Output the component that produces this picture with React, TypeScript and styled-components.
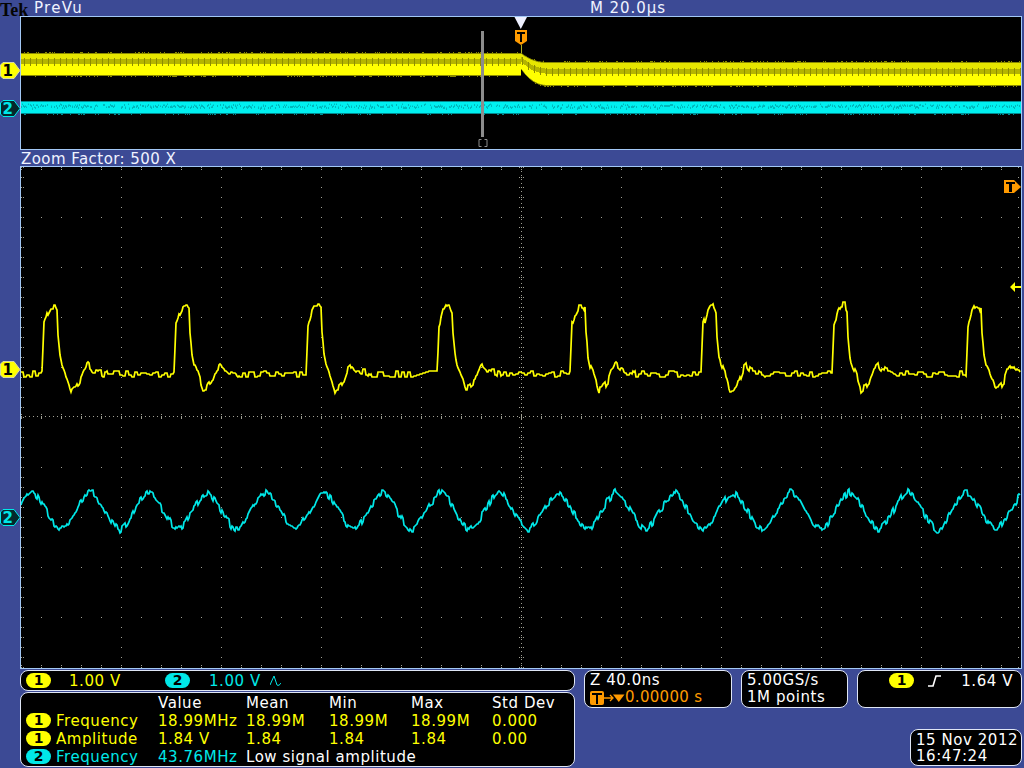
import React from "react";
import styled, { createGlobalStyle } from "styled-components";

const BG = "#3c4a95";
const EDGE = "#a3c8f5";
const PANEL_EDGE = "#dfe6f5";
const YELLOW = "#ffff00";
const CYAN = "#00e8e8";
const ORANGE = "#ff9a00";

const Global = createGlobalStyle`
  html, body { margin: 0; padding: 0; background: ${BG}; }
  #root { width: 1024px; height: 768px; overflow: hidden; }
`;

const Screen = styled.div`
  position: relative;
  width: 1024px;
  height: 768px;
  box-sizing: border-box;
  padding: 0 2px 0 20px;
  background: ${BG};
  overflow: hidden;
  font-family: "DejaVu Sans", sans-serif;
  font-size: 15px;
  letter-spacing: 0.55px;
  color: #fff;
  display: flex;
  flex-direction: column;
`;

const TopBar = styled.div`
  height: 16px;
  box-sizing: border-box;
  padding-top: 1px;
  line-height: 15px;
  display: grid;
  grid-template-columns: 1fr 1fr;
  color: #f0f3ff;
`;

const PreVu = styled.span`
  padding-left: 14px;
  letter-spacing: 1.3px;
`;

const Timebase = styled.span`
  padding-left: 69px;
  letter-spacing: 0.95px;
`;

const Logo = styled.span`
  position: absolute;
  left: 0;
  top: 0;
  font-family: "Liberation Serif", serif;
  font-weight: 700;
  font-size: 18px;
  line-height: 20px;
  letter-spacing: 0;
  color: #050505;
`;

const PlotFrame = styled.div<{ $h: number }>`
  height: ${(p) => p.$h}px;
  box-sizing: border-box;
  border: 1px solid ${EDGE};
  background: #000;
  flex: none;
`;

const Plot = styled.svg`
  display: block;
  width: 100%;
  height: 100%;
`;

const ZoomTitle = styled.div`
  height: 16px;
  box-sizing: border-box;
  padding: 1px 0 0 1px;
  line-height: 16px;
  letter-spacing: 0.45px;
  color: #f0f3ff;
`;

const Bottom = styled.div`
  display: grid;
  grid-template-columns: 555px 1fr;
  column-gap: 9px;
  padding-top: 1px;
`;

const LeftStack = styled.div`
  display: flex;
  flex-direction: column;
  gap: 1px;
`;

const RightStack = styled.div`
  display: flex;
  flex-direction: column;
  align-items: flex-end;
  gap: 21px;
`;

const RightRow = styled.div`
  display: flex;
  gap: 9px;
  width: 100%;
`;

const Panel = styled.div`
  box-sizing: border-box;
  background: #000;
  border: 1px solid ${PANEL_EDGE};
  border-radius: 8px;
`;

const ChannelBar = styled(Panel)`
  height: 21px;
  display: flex;
  align-items: center;
  padding-left: 5px;
  line-height: 18px;
`;

const Badge = styled.span<{ $c: string }>`
  flex: none;
  display: inline-block;
  width: 25px;
  height: 15px;
  border-radius: 8px;
  background: ${(p) => p.$c};
  color: #000;
  font-size: 14px;
  font-weight: 700;
  letter-spacing: 0;
  line-height: 15px;
  text-align: center;
`;

const ChannelValue = styled.span<{ $c: string; $w: number; $l: number }>`
  width: ${(p) => p.$w}px;
  padding-left: ${(p) => p.$l}px;
  box-sizing: border-box;
  color: ${(p) => p.$c};
  flex: none;
  white-space: nowrap;
`;

const Measures = styled(Panel)`
  height: 75px;
  display: grid;
  grid-template-columns: 30px 102px 88px 83px 82px 81px 1fr;
  grid-auto-rows: 18px;
  padding: 0 0 0 5px;
  line-height: 18px;
  white-space: nowrap;
  align-items: center;
  align-content: center;
`;

const Cell = styled.span<{ $c?: string; $span?: number }>`
  color: ${(p) => p.$c ?? "#fff"};
  grid-column: ${(p) => (p.$span ? `span ${p.$span}` : "auto")};
`;

const ZPanel = styled(Panel)`
  width: 148px;
  height: 38px;
  padding: 1px 0 0 5px;
  line-height: 17px;
  flex: none;
`;

const OrangeRow = styled.div`
  display: flex;
  align-items: center;
  color: ${ORANGE};
  letter-spacing: 0.3px;
`;

const SamplePanel = styled(Panel)`
  width: 107px;
  height: 38px;
  padding: 1px 0 0 5px;
  line-height: 17px;
  flex: none;
`;

const TriggerPanel = styled(Panel)`
  flex: 1;
  height: 38px;
  display: flex;
  align-items: flex-start;
  padding: 2px 8px 0 31px;
  line-height: 16px;
`;

const TriggerLevel = styled.span`
  margin-left: auto;
`;

const StepIcon = styled.svg`
  margin: 2px 0 0 14px;
  flex: none;
`;

const DatePanel = styled(Panel)`
  width: 112px;
  height: 37px;
  padding: 2px 0 0 5px;
  line-height: 16px;
`;

const Marker = styled.svg<{ $x: number; $y: number }>`
  position: absolute;
  left: ${(p) => p.$x}px;
  top: ${(p) => p.$y}px;
`;

function rng(seed: number) {
  let s = seed;
  return () => {
    s = (s * 1664525 + 1013904223) % 4294967296;
    return s / 4294967296;
  };
}

function yellowTrace(): string {
  const r = rng(7);
  const rises = [42, 174, 306, 437, 570, 701, 832, 966];
  const shape: [number, number][] = [
    [-2, 374], [0, 374], [1, 350], [2, 325], [4, 320], [6, 312], [9, 306], [13, 305], [15, 310],
    [16, 335], [18, 355], [20, 365], [23, 372], [26, 380], [29, 390], [33, 387], [38, 381],
    [42, 370], [46, 365], [50, 370], [58, 372], [64, 375],
  ];
  const pts: string[] = [];
  let burst = 0;
  for (let x = 21; x <= 1020; x += 1) {
    let y = 374;
    const rise = [...rises].reverse().find((v) => x >= v - 2);
    if (rise !== undefined) {
      const dx = x - rise;
      if (dx <= 64) {
        for (let i = 0; i < shape.length - 1; i++) {
          if (dx >= shape[i][0] && dx <= shape[i + 1][0]) {
            const t = (dx - shape[i][0]) / (shape[i + 1][0] - shape[i][0]);
            y = shape[i][1] + t * (shape[i + 1][1] - shape[i][1]);
          }
        }
      }
    }
    if (x % 3 === 0) burst = (r() - 0.5) * 7;
    pts.push(`${x},${Math.round(y + burst)}`);
  }
  return pts.join(" ");
}

function cyanTrace(): string {
  const r = rng(21);
  const pts: string[] = [];
  let burst = 0;
  for (let x = 21; x <= 1020; x += 1) {
    const ph = ((x - 32) / 58.4) * Math.PI * 2;
    const tri = (2 / Math.PI) * Math.asin(Math.cos(ph));
    const blend = 0.45 * tri + 0.55 * Math.cos(ph);
    if (x % 2 === 0) burst = (r() - 0.5) * 7;
    const y = 511 - blend * 19 + burst;
    pts.push(`${x},${Math.round(y)}`);
  }
  return pts.join(" ");
}

function gridDots(): string {
  const parts: string[] = [];
  const dot = (x: number, y: number) => parts.push(`M${x} ${y}h1v1h-1z`);
  for (let i = 0; i <= 10; i++) {
    const mx = 21 + i * 100;
    for (let y = 167; y <= 667; y += 10) dot(mx, y);
  }
  for (let j = 0; j <= 10; j++) {
    const my = 167 + j * 50;
    for (let x = 21; x <= 1020; x += 20) dot(x, my);
  }
  for (let x = 21; x <= 1020; x += 4) dot(x, 416);
  for (let y = 167; y <= 667; y += 4) dot(521, y);
  for (let x = 21; x <= 1021; x += 20) {
    dot(x, 414);
    dot(x, 418);
    dot(x, 169);
    dot(x, 665);
  }
  for (let y = 167; y <= 667; y += 10) {
    dot(519, y);
    dot(523, y);
    dot(23, y);
    dot(1018, y);
  }
  return parts.join("");
}

function yEdges(x: number): [number, number] {
  if (x < 521) return [53, 76];
  const t = Math.min(1, (x - 521) / 26);
  const e = 1 - Math.pow(1 - t, 2.2);
  return [53 + 9 * e, 70 + 16 * e];
}

function previewColumns() {
  const r = rng(5);
  const olive: string[] = [];
  const top: string[] = [];
  const bright: string[] = [];
  const mid: string[] = [];
  const tick: string[] = [];
  const cyanEdge: string[] = [];
  const cyanFill: string[] = [];
  const cyanMid: string[] = [];
  for (let x = 21; x < 1021; x++) {
    const [t, b] = yEdges(x);
    const jt = r() > 0.8 ? 1 : 0;
    const jb = r() > 0.8 ? 1 : 0;
    const midY = Math.round(t + (b - t) * 0.4);
    olive.push(`M${x} ${t - jt}V${b + jb}h1V${t - jt}z`);
    top.push(`M${x} ${t + 1}V${midY}h1V${t + 1}z`);
    bright.push(`M${x} ${midY}V${b - 1}h1V${midY}z`);
    mid.push(`M${x} ${midY - 3}v5h1v-5z`);
    if (x % 6 === 0) tick.push(`M${x} ${midY - 4}v8h1v-8z`);
    cyanEdge.push(`M${x} 101V${114 + (r() > 0.85 ? 1 : 0)}h1V101z`);
    cyanFill.push(`M${x} 102V113h1V102z`);
    if (r() > 0.35) cyanMid.push(`M${x} ${104 + Math.round(r() * 3)}v${1 + Math.round(r() * 2)}h1v-2z`);
  }
  return {
    olive: olive.join(""),
    top: top.join(""),
    bright: bright.join(""),
    mid: mid.join(""),
    tick: tick.join(""),
    cyanEdge: cyanEdge.join(""),
    cyanFill: cyanFill.join(""),
    cyanMid: cyanMid.join(""),
  };
}

const Y_TRACE = yellowTrace();
const C_TRACE = cyanTrace();
const DOTS = gridDots();
const COLS = previewColumns();

function ChannelMarker({ n, y, color }: { n: number; y: number; color: string }) {
  const filled = n === 1;
  return (
    <Marker $x={0} $y={y} width={21} height={17} viewBox="0 0 21 17">
      <path
        d="M0.5 3 L3 0.5 H14 L20 8.5 L14 16.5 H3 L0.5 14 Z"
        fill={filled ? YELLOW : "#04282c"}
        stroke={filled ? "#d8d8a0" : color}
        strokeWidth={1}
      />
      <text
        x={8}
        y={14}
        textAnchor="middle"
        fontFamily="DejaVu Sans, sans-serif"
        fontSize={15}
        fontWeight={700}
        fill={filled ? "#000" : color}
      >
        {n}
      </text>
    </Marker>
  );
}

function TIcon({ size = 14 }: { size?: number }) {
  return (
    <svg width={size} height={size} viewBox="0 0 14 14" style={{ flex: "none" }}>
      <rect x={0} y={0} width={14} height={14} rx={2} fill={ORANGE} />
      <path d="M2 2h10v2H8v9H6V4H2z" fill="#000" />
    </svg>
  );
}

function Wave() {
  return (
    <svg width={11} height={12} viewBox="0 0 11 12" style={{ flex: "none" }}>
      <path d="M0 10 L4 1 L7 10 C8 11 10 10 11 8" fill="none" stroke={CYAN} strokeWidth={1} />
    </svg>
  );
}

export default function App() {
  return (
    <Screen>
      <Global />
      <Logo>Tek</Logo>
      <TopBar>
        <PreVu>PreVu</PreVu>
        <Timebase>M 20.0µs</Timebase>
      </TopBar>

      <PlotFrame $h={134}>
        <Plot viewBox="21 17 1000 132" preserveAspectRatio="none">
          <path d={COLS.olive} fill="#8a8a00" />
          <path d={COLS.top} fill="#e6e600" />
          <path d={COLS.bright} fill="#ffff00" />
          <path d={COLS.mid} fill="#b4b400" />
          <path d={COLS.tick} fill="#8c8c00" />
          <path d={COLS.cyanEdge} fill="#008a90" />
          <path d={COLS.cyanFill} fill="#00f0f0" />
          <path d={COLS.cyanMid} fill="#00b8bc" />
          <rect x={481} y={31} width={3} height={106} fill="#8c8c8c" />
          <path d="M481.5 139.5h-2.500v7h2.500M484.500 139.500h2.500v7h-2.500" fill="none" stroke="#8c8c8c" />
          <path d="M514.500 17 H527 L520.800 29 Z" fill="#eef0ff" />
          <path d="M515 30 H527 V41 L521 45 L515 41 Z" fill={ORANGE} />
          <path d="M517 32 H525 V34 H522 V42 H520 V34 H517 Z" fill="#000" />
          <rect x={521} y={45} width={1} height={8} fill="#b0b020" />
        </Plot>
      </PlotFrame>

      <ZoomTitle>Zoom Factor: 500 X</ZoomTitle>

      <PlotFrame $h={503}>
        <Plot viewBox="21 167 1000 501" preserveAspectRatio="none">
          <path d={DOTS} fill="#a0a094" />
          <polyline points={Y_TRACE} fill="none" stroke={YELLOW} strokeWidth={1.7} />
          <polyline points={C_TRACE} fill="none" stroke={CYAN} strokeWidth={1.7} />
          <path d="M1004 180 H1014 L1021 187 L1014 193 H1004 Z" fill={ORANGE} />
          <path d="M1006 182 H1015 V184 H1012 V192 H1009 V184 H1006 Z" fill="#000" />
          <path d="M1010 287 L1015 282 V286 H1021 V288 H1015 V292 Z" fill={YELLOW} />
        </Plot>
      </PlotFrame>

      <Bottom>
        <LeftStack>
          <ChannelBar>
            <Badge $c={YELLOW}>1</Badge>
            <ChannelValue $c={YELLOW} $w={114} $l={18}>1.00 V</ChannelValue>
            <Badge $c={CYAN}>2</Badge>
            <ChannelValue $c={CYAN} $w={80} $l={19}>1.00 V</ChannelValue>
            <Wave />
          </ChannelBar>
          <Measures>
            <span />
            <span />
            <Cell>Value</Cell>
            <Cell>Mean</Cell>
            <Cell>Min</Cell>
            <Cell>Max</Cell>
            <Cell>Std Dev</Cell>

            <Badge $c={YELLOW}>1</Badge>
            <Cell $c={YELLOW}>Frequency</Cell>
            <Cell $c={YELLOW}>18.99MHz</Cell>
            <Cell $c={YELLOW}>18.99M</Cell>
            <Cell $c={YELLOW}>18.99M</Cell>
            <Cell $c={YELLOW}>18.99M</Cell>
            <Cell $c={YELLOW}>0.000</Cell>

            <Badge $c={YELLOW}>1</Badge>
            <Cell $c={YELLOW}>Amplitude</Cell>
            <Cell $c={YELLOW}>1.84 V</Cell>
            <Cell $c={YELLOW}>1.84</Cell>
            <Cell $c={YELLOW}>1.84</Cell>
            <Cell $c={YELLOW}>1.84</Cell>
            <Cell $c={YELLOW}>0.00</Cell>

            <Badge $c={CYAN}>2</Badge>
            <Cell $c={CYAN}>Frequency</Cell>
            <Cell $c={CYAN}>43.76MHz</Cell>
            <Cell $span={4}>Low signal amplitude</Cell>
          </Measures>
        </LeftStack>

        <RightStack>
          <RightRow>
            <ZPanel>
              <div>Z 40.0ns</div>
              <OrangeRow>
                <TIcon />
                <svg width={21} height={12} viewBox="0 0 21 12" style={{ flex: "none" }}>
                  <path d="M0 6 H8 M6 3 L9 6 L6 9" fill="none" stroke={ORANGE} strokeWidth={1.3} />
                  <path d="M9 2.500 H20.500 L14.800 10 Z" fill={ORANGE} />
                </svg>
                0.00000 s
              </OrangeRow>
            </ZPanel>
            <SamplePanel>
              <div>5.00GS/s</div>
              <div>1M points</div>
            </SamplePanel>
            <TriggerPanel>
              <Badge $c={YELLOW}>1</Badge>
              <StepIcon width={13} height={12} viewBox="0 0 13 12">
                <path d="M0 11 H5 L8 1 H13" fill="none" stroke="#fff" strokeWidth={1.6} />
              </StepIcon>
              <TriggerLevel>1.64 V</TriggerLevel>
            </TriggerPanel>
          </RightRow>
          <DatePanel>
            <div>15 Nov 2012</div>
            <div>16:47:24</div>
          </DatePanel>
        </RightStack>
      </Bottom>

      <ChannelMarker n={1} y={62} color={YELLOW} />
      <ChannelMarker n={2} y={100} color={CYAN} />
      <ChannelMarker n={1} y={361} color={YELLOW} />
      <ChannelMarker n={2} y={509} color={CYAN} />
    </Screen>
  );
}
